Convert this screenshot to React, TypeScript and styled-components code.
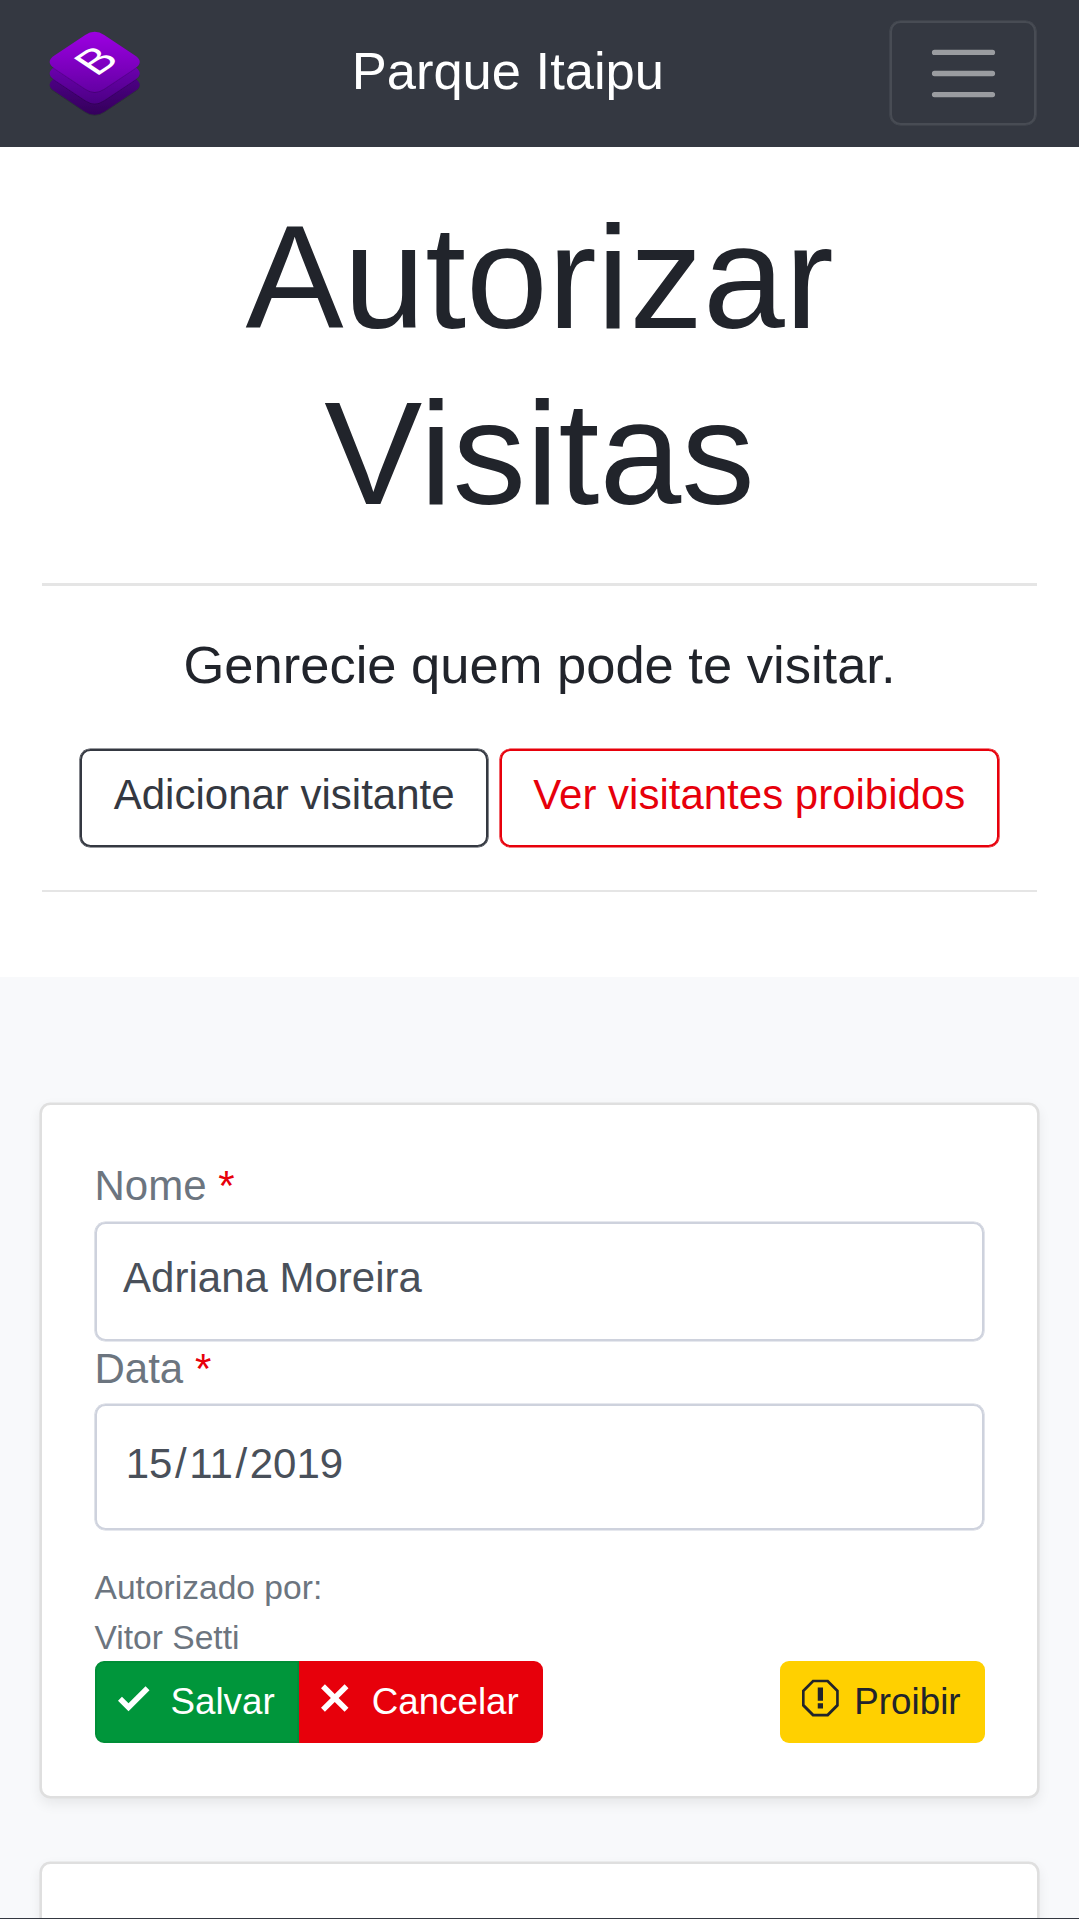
import React from "react";
import styled, { createGlobalStyle, css } from "styled-components";

const GlobalStyle = createGlobalStyle`
  *, *::before, *::after { box-sizing: border-box; }
  html, body { margin: 0; height: 1919px; overflow: hidden; }
  body {
    background: #fff;
    color: #21242b;
    font-family: "Liberation Sans", Arial, sans-serif;
    font-size: 42px;
    line-height: 63px;
  }
`;

/* A border slightly thicker than two pixels: a solid line plus a thin outer ring. */
const outline = (color: string) => css`
  border: 2px solid ${color};
  box-shadow: 0 0 0 0.6px ${color};
`;

const Page = styled.div`
  display: flex;
  flex-direction: column;
  height: 1919px;
  overflow: hidden;
  border-bottom: 1px solid #343841;
`;

const Navbar = styled.header`
  display: flex;
  align-items: center;
  flex: none;
  height: 147px;
  padding: 0 42px;
  background: #343841;
`;

const Brand = styled.span`
  margin-left: 204.7px;
  padding-bottom: 7px;
  color: #fff;
  font-size: 52.5px;
  line-height: 79px;
`;

const Toggler = styled.button`
  display: flex;
  align-items: center;
  justify-content: center;
  width: 146px;
  height: 104px;
  margin: 0 1px 1px auto;
  padding: 1px 0 0;
  background: transparent;
  ${outline("#484c54")}
  border-radius: 10.5px;
`;

const Hero = styled.section`
  flex: none;
  height: 829.6px;
  padding: 42px 42px 0;
  text-align: center;
`;

const Title = styled.h1`
  margin: 0 0 41.4px;
  font-size: 147px;
  font-weight: 400;
  line-height: 176.4px;
`;

const Rule = styled.hr`
  height: 2.6px;
  margin: 0;
  border: 0;
  background: rgba(0, 0, 0, 0.1);
`;

const Lead = styled.p`
  margin: 40px 0 44.2px;
  font-size: 52.5px;
  line-height: 78.75px;
`;

const HeroActions = styled.div`
  display: flex;
  justify-content: center;
  gap: 11.2px;
  margin-bottom: 42.4px;
`;

const OutlineButton = styled.button<{ $color: string }>`
  height: 98.6px;
  padding: 0 31.8px 8px;
  background: transparent;
  ${(p) => outline(p.$color)}
  border-radius: 10.5px;
  color: ${(p) => p.$color};
  font: inherit;
  white-space: nowrap;
`;

const Album = styled.main`
  display: flex;
  flex-direction: column;
  gap: 64px;
  flex: none;
  height: 960px;
  padding: 126.4px 40px 0;
  background: #f8f9fb;
`;

const Card = styled.article`
  flex: none;
  height: 694.6px;
  padding: 49.2px 52.5px;
  background: #fff;
  border: 2px solid #dfdfdf;
  border-radius: 10.5px;
  box-shadow: 0 0 0 0.6px #dfdfdf, 0 5.25px 13px rgba(0, 0, 0, 0.075);
`;

const Label = styled.label`
  display: block;
  height: 66.8px;
  color: #6c757f;
`;

const Required = styled.span`
  color: #e7000b;
`;

const Field = styled.div<{ $date?: boolean }>`
  display: flex;
  align-items: center;
  height: ${(p) => (p.$date ? 125.5 : 119.8)}px;
  margin: 0.6px;
  padding: 0 26px 7px;
  ${outline("#ced2dd")}
  border-radius: 10.5px;
  color: #49505a;

  & + ${Label} {
    margin-top: -4.9px;
  }
`;

const DatePart = styled.span`
  padding: 0 2.6px;
`;

const Meta = styled.div`
  height: 98.4px;
  margin-top: 33px;
  color: #6c757f;
  font-size: 33.6px;
  line-height: 50px;
`;

const Actions = styled.div`
  display: flex;
  justify-content: space-between;
`;

const Group = styled.div`
  display: flex;
`;

const tones = {
  save: css`
    width: 204.5px;
    padding-left: 21.5px;
    gap: 21px;
    background: #00963b;
    border: 2px solid #008e37;
    border-radius: 9px 0 0 9px;
    color: #fff;
  `,
  cancel: css`
    width: 244.3px;
    padding-left: 20px;
    gap: 21.2px;
    background: #e7000b;
    border-radius: 0 9px 9px 0;
    color: #fff;
  `,
  ban: css`
    width: 204.8px;
    padding-left: 22.5px;
    gap: 15.4px;
    background: #ffd000;
    border-radius: 9px;
    color: #21242b;
  `,
};

const SmallButton = styled.button<{ $tone: keyof typeof tones }>`
  display: flex;
  align-items: center;
  height: 81.4px;
  margin: 0;
  padding: 0 0 2px;
  border: 0;
  font: inherit;
  font-size: 36.75px;
  line-height: 55px;
  ${(p) => tones[p.$tone]}

  svg {
    margin-bottom: 6.6px;
  }
`;

const Octicon = ({ units, d }: { units: number; d: string }) => (
  <svg width={units * 2.625} height={42} viewBox={`0 0 ${units} 16`} fill="currentColor" aria-hidden="true">
    <path fillRule="evenodd" d={d} />
  </svg>
);

const CHECK = "M12 5l-8 8-4-4 1.5-1.5L4 10l6.5-6.5L12 5z";
const CROSS =
  "M7.48 8l3.75 3.75-1.48 1.48L6 9.48l-3.75 3.75-1.48-1.48L4.52 8 .77 4.25l1.48-1.48L6 6.52l3.75-3.75 1.48 1.48L7.48 8z";
const STOP =
  "M10 1H4L0 5v6l4 4h6l4-4V5l-4-4zm3 9.5L9.5 14h-5L1 10.5v-5L4.5 2h5L13 5.5v5zM6 4h2v5H6V4zm0 6h2v2H6v-2z";

const TILE =
  "M43.2 6.3Q52.7 0 62.2 6.3L93 26.9Q102.5 33.2 93 39.5L62.2 60.1Q52.7 66.4 43.2 60.1L12.4 39.5Q2.9 33.2 12.4 26.9Z";

const Logo = () => (
  <svg width="105" height="105" viewBox="0 0 105 105" aria-hidden="true">
    <defs>
      <linearGradient id="top" x1="0" y1="0" x2="0" y2="1">
        <stop offset="0" stopColor="#9d00e2" />
        <stop offset="1" stopColor="#6400a4" />
      </linearGradient>
      <linearGradient id="mid" x1="0" y1="0.4" x2="0" y2="1">
        <stop offset="0" stopColor="#6b00ad" />
        <stop offset="1" stopColor="#4c0085" />
      </linearGradient>
      <linearGradient id="low" x1="0" y1="0.4" x2="0" y2="1">
        <stop offset="0" stopColor="#4c0084" />
        <stop offset="1" stopColor="#34005b" />
      </linearGradient>
      <filter id="soft" x="-10%" y="-10%" width="120%" height="125%">
        <feDropShadow dx="0" dy="0.6" stdDeviation="0.7" floodColor="#000" floodOpacity="0.3" />
      </filter>
    </defs>
    <path d={TILE} transform="translate(0 30.6)" fill="url(#low)" filter="url(#soft)" />
    <path d={TILE} transform="translate(0 19.2)" fill="url(#mid)" filter="url(#soft)" />
    <path d={TILE} transform="translate(0 7.7)" fill="url(#top)" filter="url(#soft)" />
    <text
      transform="matrix(3.75 -2.5 3.65 2.43 54 56)"
      fontFamily="Liberation Sans"
      fontSize="10"
      fill="#fff"
    >
      B
    </text>
  </svg>
);

export default function App() {
  return (
    <>
      <GlobalStyle />
      <Page>
        <Navbar>
          <Logo />
          <Brand>Parque Itaipu</Brand>
          <Toggler aria-label="Menu">
            <svg width="79" height="79" viewBox="0 0 30 30" aria-hidden="true">
              <path
                d="M4 7h22M4 15h22M4 23h22"
                stroke="rgba(255,255,255,0.5)"
                strokeWidth="2"
                strokeLinecap="round"
                strokeMiterlimit="10"
              />
            </svg>
          </Toggler>
        </Navbar>
        <Hero>
          <Title>
            Autorizar
            <br />
            Visitas
          </Title>
          <Rule />
          <Lead>Genrecie quem pode te visitar.</Lead>
          <HeroActions>
            <OutlineButton $color="#343841">Adicionar visitante</OutlineButton>
            <OutlineButton $color="#e7000b">Ver visitantes proibidos</OutlineButton>
          </HeroActions>
          <Rule />
        </Hero>
        <Album>
          <Card>
            <Label>
              Nome <Required>*</Required>
            </Label>
            <Field>Adriana Moreira</Field>
            <Label>
              Data <Required>*</Required>
            </Label>
            <Field $date>
              <DatePart>15</DatePart>/<DatePart>11</DatePart>/<DatePart>2019</DatePart>
            </Field>
            <Meta>
              Autorizado por:
              <br />
              Vitor Setti
            </Meta>
            <Actions>
              <Group>
                <SmallButton $tone="save">
                  <Octicon units={12} d={CHECK} />
                  Salvar
                </SmallButton>
                <SmallButton $tone="cancel">
                  <Octicon units={12} d={CROSS} />
                  Cancelar
                </SmallButton>
              </Group>
              <SmallButton $tone="ban">
                <Octicon units={14} d={STOP} />
                Proibir
              </SmallButton>
            </Actions>
          </Card>
          <Card />
        </Album>
      </Page>
    </>
  );
}
